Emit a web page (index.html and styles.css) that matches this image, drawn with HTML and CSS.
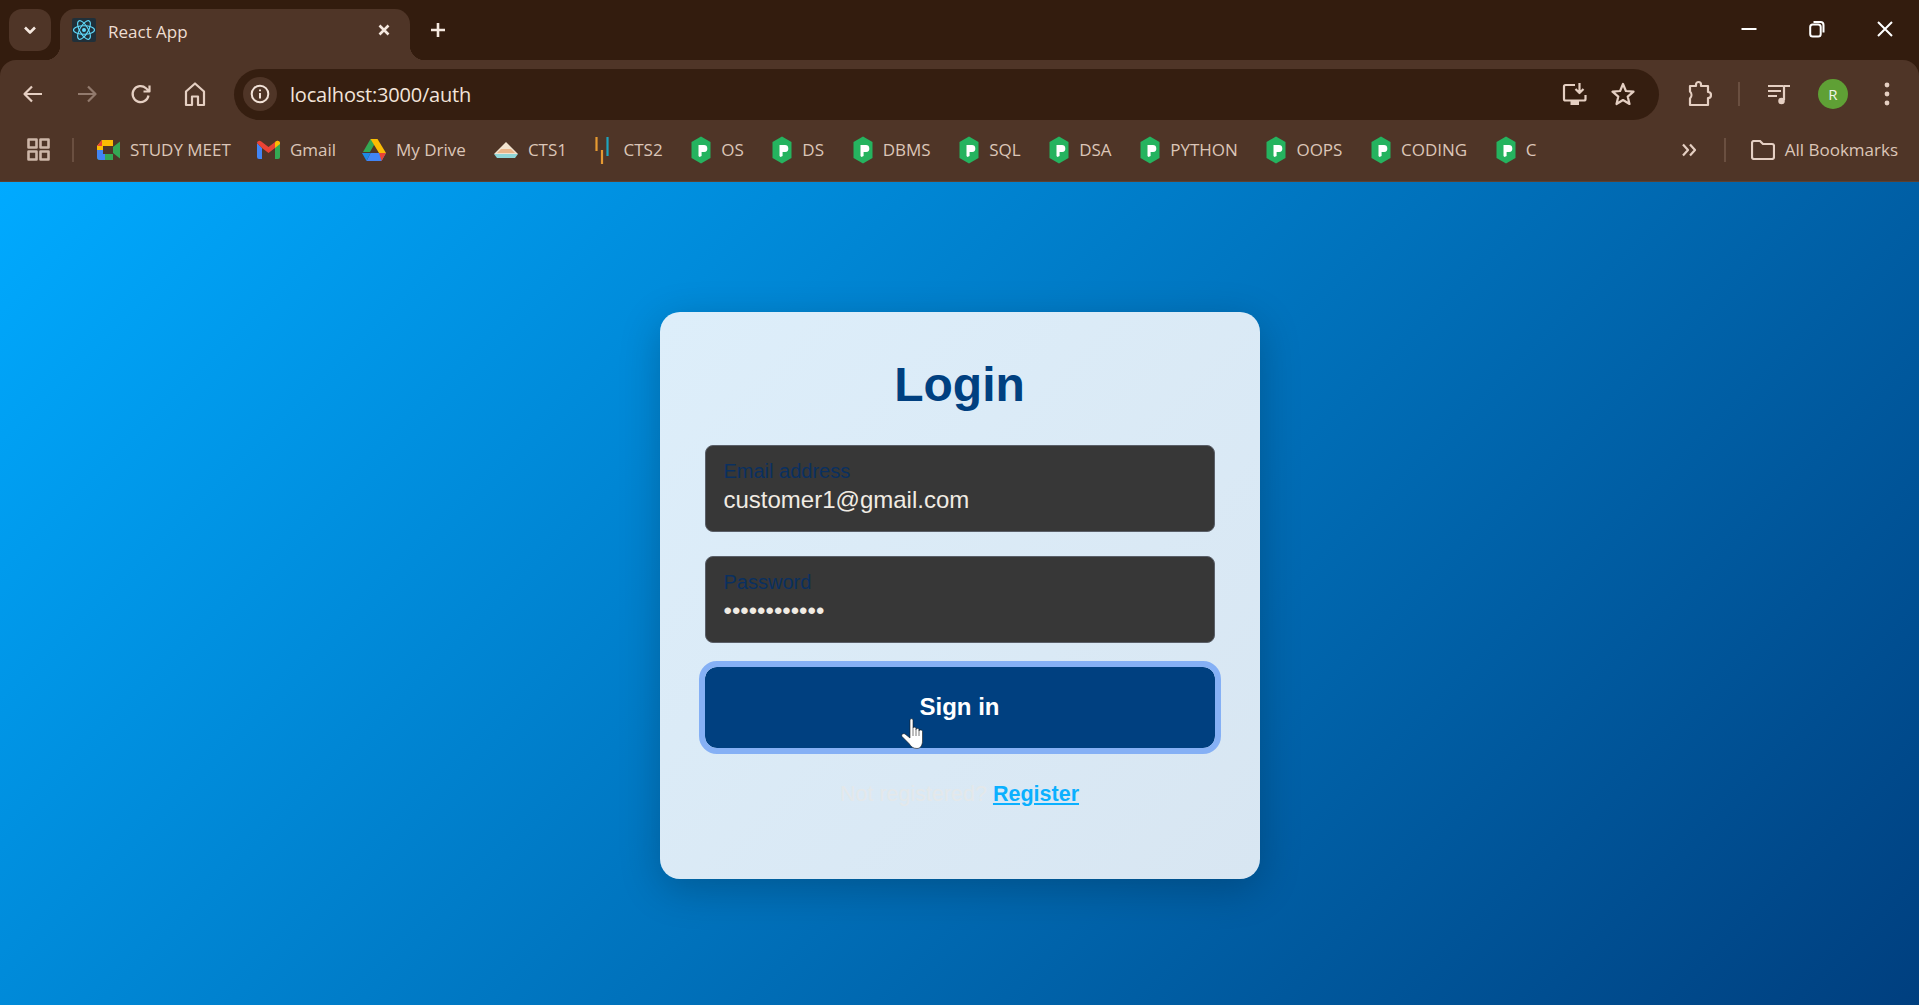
FILE: index.html
```html
<!DOCTYPE html>
<html lang="en">
<head>
<meta charset="utf-8">
<title>React App</title>
<link rel="stylesheet" href="styles.css">
</head>
<body>
<svg class="sprite" aria-hidden="true">
  <symbol id="hex" viewBox="0 0 20 28">
    <path d="M10 0.5 19.5 6V22L10 27.5 0.5 22V6Z" fill="#25b35f"/>
    <path d="M7.500 9h5a3.500 3.500 0 0 1 .6 7H10.600V20L8.500 21 7.500 20Z" fill="#fff"/>
  </symbol>
</svg>
<div class="browser">
  <header class="tabstrip">
    <button class="tabsearch"><svg width="14" height="14" viewBox="0 0 14 14"><path d="M2 4.5 7 9.5 12 4.5" class="ic-w"/></svg></button>
    <div class="tab">
      <svg class="favicon" width="24" height="24" viewBox="0 0 24 24">
        <rect width="24" height="24" rx="2" fill="#20303a"/>
        <g fill="none" stroke="#61dafb" stroke-width="1.1">
          <ellipse cx="12" cy="12" rx="10.5" ry="4.2"/>
          <ellipse cx="12" cy="12" rx="10.5" ry="4.2" transform="rotate(60 12 12)"/>
          <ellipse cx="12" cy="12" rx="10.5" ry="4.2" transform="rotate(120 12 12)"/>
        </g>
        <circle cx="12" cy="12" r="2" fill="#61dafb"/>
      </svg>
      <span class="tab-title">React App</span>
      <svg class="tab-close" width="14" height="14" viewBox="0 0 14 14"><path d="M2.5 2.5 11.5 11.5M11.5 2.5 2.5 11.5" class="ic-w"/></svg>
    </div>
    <button class="newtab"><svg width="18" height="18" viewBox="0 0 18 18"><path d="M9 2V16M2 9H16" class="ic-w"/></svg></button>
    <div class="winctl">
      <button class="wbtn"><svg width="16" height="16" viewBox="0 0 16 16"><path d="M0.5 8H15.5" class="ic-win"/></svg></button>
      <button class="wbtn"><svg width="16" height="18" viewBox="0 0 16 18"><rect x="1.2" y="4.5" width="10.5" height="12" rx="2.5" class="ic-win"/><path d="M4.5 2H11.5A3 3 0 0 1 14.5 5V12.5" class="ic-win"/></svg></button>
      <button class="wbtn"><svg width="18" height="18" viewBox="0 0 18 18"><path d="M2 2 16 16M16 2 2 16" class="ic-win"/></svg></button>
    </div>
  </header>

  <nav class="toolbar">
    <button class="cell"><svg width="24" height="24" viewBox="0 0 24 24"><path d="M21 12H4M11 4.5 3.5 12 11 19.500" class="ic"/></svg></button>
    <button class="cell dim"><svg width="24" height="24" viewBox="0 0 24 24"><path d="M3 12H20M13 4.500 20.500 12 13 19.500" class="ic"/></svg></button>
    <button class="cell"><svg width="24" height="24" viewBox="0 0 24 24"><path d="M19.500 13.500A8 8 0 1 1 17 6.200L20 9M20.500 3.500V9.500H14.500" class="ic"/></svg></button>
    <button class="cell"><svg width="24" height="26" viewBox="0 0 24 26"><path d="M3 24V10.500L12 2.500 21 10.500V24H15V15.500H9V24Z" class="ic"/></svg></button>
    <div class="omnibox">
      <span class="info"><svg width="20" height="20" viewBox="0 0 20 20"><circle cx="10" cy="10" r="8.300" class="ic-t"/><path d="M10 9V14.500M10 5.500V7.200" class="ic-t"/></svg></span>
      <span class="url">localhost:3000/auth</span>
      <div class="omni-actions">
        <button class="cell-s"><svg width="26" height="26" viewBox="0 0 26 26"><path d="M13 4H3.500A1.500 1.500 0 0 0 2 5.500V18A1.500 1.500 0 0 0 3.500 19.500H22A1.500 1.500 0 0 0 23.500 18V14M17.500 2V11.500M13.500 8 17.500 12 21.500 8" class="ic"/><path d="M8.500 20H17V24H8.500Z" fill="#e5cfc2"/></svg></button>
        <button class="cell-s"><svg width="24" height="24" viewBox="0 0 24 24"><path d="M12 2 14.900 9 22.500 9.600 16.700 14.600 18.500 22 12 18 5.500 22 7.300 14.600 1.500 9.600 9.100 9Z" class="ic"/></svg></button>
      </div>
    </div>
    <div class="tool-right">
      <button class="cell-s"><svg width="26" height="28" viewBox="0 0 26 28"><path d="M4 6H10V4.500A2.500 2.500 0 0 1 15 4.500V6H22V12A3 3 0 0 1 22 18V25H4V18.500A5 5 0 0 0 4 11.500Z" class="ic"/></svg></button>
      <span class="vsep"></span>
      <button class="cell-s"><svg width="26" height="24" viewBox="0 0 26 24"><path d="M2 4H17M2 9H15M2 14H11M18 18V4H24" class="ic"/><circle cx="15.500" cy="19" r="3.300" fill="#e5cfc2"/></svg></button>
      <span class="avatar-cell"><span class="avatar">R</span></span>
      <button class="cell-s"><svg width="6" height="26" viewBox="0 0 6 26"><circle cx="3" cy="4" r="2.400" fill="#e5cfc2"/><circle cx="3" cy="13" r="2.400" fill="#e5cfc2"/><circle cx="3" cy="22" r="2.400" fill="#e5cfc2"/></svg></button>
    </div>
  </nav>

  <nav class="bookmarks">
    <svg class="apps" width="23" height="23" viewBox="0 0 23 23"><rect x="1.500" y="1.500" width="8" height="8" class="ic-g"/><rect x="13.500" y="1.500" width="8" height="8" class="ic-g"/><rect x="1.500" y="13.500" width="8" height="8" class="ic-g"/><rect x="13.500" y="13.500" width="8" height="8" class="ic-g"/></svg>
    <span class="vsep sep-apps"></span>
    <ul class="bm-list">
      <li class="bm"><svg width="23" height="20" viewBox="0 0 23 20"><path d="M5 0H16V6H6V14H16V20H3A3 3 0 0 1 0 17V6Z" fill="#34a853"/><path d="M5 0H16V6H6V10H0V6Z" fill="#fbbc04"/><path d="M0 10H6V14H8V20H3A3 3 0 0 1 0 17Z" fill="#4285f4"/><path d="M0 6 5 0V6Z" fill="#ea4335"/><path d="M16 7 23 1.500V18.500L16 13Z" fill="#34a853"/></svg>STUDY MEET</li>
      <li class="bm"><svg width="23" height="20" viewBox="0 0 23 20"><path d="M0 3V17A2 2 0 0 0 2 19H5V8Z" fill="#4285f4"/><path d="M23 3V17A2 2 0 0 1 21 19H18V8Z" fill="#34a853"/><path d="M0 3C0 1 2.500 0 4 1.200L11.500 7 19 1.200C20.500 0 23 1 23 3L18 8 11.500 13 5 8Z" fill="#ea4335"/><path d="M18 8V2.500L19 1.200C20.500 0 23 1 23 3V4Z" fill="#fbbc04"/></svg>Gmail</li>
      <li class="bm"><svg width="24" height="22" viewBox="0 0 24 22"><path d="M8.500 0H15.500L8 13H1Z" fill="#34a853"/><path d="M8.500 0H15.500L24 14H17Z" fill="#fbbc04"/><path d="M4.500 22H19.500L24 14H8.500Z" fill="#4285f4"/><path d="M17 14H24L19.500 22Z" fill="#ea4335"/><path d="M8.500 14 0 14 4.500 22Z" fill="#1e88e5"/><path d="M12 7 16 14H8Z" fill="#4f3527"/></svg>My Drive</li>
      <li class="bm bm-cts1"><svg width="24" height="18" viewBox="0 0 24 18"><path d="M12 1 24 13H0Z" fill="#f2e3cf"/><path d="M7 8H17L21 12H3Z" fill="#e9b58a"/><path d="M0 13H24L21 17H3Z" fill="#8fd6d8"/></svg>CTS1</li>
      <li class="bm bm-cts2"><svg width="14" height="28" viewBox="0 0 14 28"><path d="M1.500 1V15" stroke="#e69a32" stroke-width="2.200"/><path d="M7 14V28" stroke="#e69a32" stroke-width="2.200"/><path d="M12.500 1V20" stroke="#1ea4c0" stroke-width="2.200"/></svg>CTS2</li>
      <li class="bm bm-hex"><svg class="hex" viewBox="0 0 20 28"><use href="#hex"/></svg>OS</li>
      <li class="bm bm-hex"><svg class="hex" viewBox="0 0 20 28"><use href="#hex"/></svg>DS</li>
      <li class="bm bm-hex"><svg class="hex" viewBox="0 0 20 28"><use href="#hex"/></svg>DBMS</li>
      <li class="bm bm-hex"><svg class="hex" viewBox="0 0 20 28"><use href="#hex"/></svg>SQL</li>
      <li class="bm bm-hex"><svg class="hex" viewBox="0 0 20 28"><use href="#hex"/></svg>DSA</li>
      <li class="bm bm-hex"><svg class="hex" viewBox="0 0 20 28"><use href="#hex"/></svg>PYTHON</li>
      <li class="bm bm-hex"><svg class="hex" viewBox="0 0 20 28"><use href="#hex"/></svg>OOPS</li>
      <li class="bm bm-hex"><svg class="hex" viewBox="0 0 20 28"><use href="#hex"/></svg>CODING</li>
      <li class="bm bm-hex"><svg class="hex" viewBox="0 0 20 28"><use href="#hex"/></svg>C</li>
    </ul>
    <div class="bm-right">
      <svg width="16" height="14" viewBox="0 0 16 14"><path d="M2 1.500 7 7 2 12.500M9 1.500 14 7 9 12.500" class="ic"/></svg>
      <span class="vsep sep-all"></span>
      <span class="bm"><svg width="24" height="20" viewBox="0 0 24 20"><path d="M1 3A2 2 0 0 1 3 1H9L12 4H21A2 2 0 0 1 23 6V17A2 2 0 0 1 21 19H3A2 2 0 0 1 1 17Z" class="ic"/></svg>All Bookmarks</span>
    </div>
  </nav>

  <main class="page">
    <section class="card">
      <h1 class="title">Login</h1>
      <div class="field">
        <span class="field-label">Email address</span>
        <span class="field-value">customer1@gmail.com</span>
      </div>
      <div class="field">
        <span class="field-label">Password</span>
        <span class="field-value">••••••••••••</span>
      </div>
      <div class="submit">
        <button class="signin">Sign in</button>
        <svg class="cursor" width="24" height="31" viewBox="0 0 24 31"><path d="M9 2C9 .3 12 .3 12 2V10C12 8.800 15 8.800 15 10.500V11.500C15 10 18 10 18 11.800V13C18 11.500 21.500 11.500 21.500 13.500V23C21.500 27 19.500 30.500 16 30.500C12 30.500 10 28.500 8 25.500L1 18.500C0 16.500 2 15 4 16L9 20Z" fill="#fff" stroke="#1a1a1a" stroke-width=".6"/><path d="M12 10V18M15 11V18M18 12.500V18" stroke="#555" stroke-width=".8" fill="none"/></svg>
      </div>
      <p class="switch"><span class="switch-q">Not registered?</span> <a class="switch-link" href="#">Register</a></p>
    </section>
  </main>
</div>
</body>
</html>
```

FILE: styles.css
```css
* { box-sizing: border-box; }
html, body { margin: 0; height: 100%; overflow: hidden; }
body { font-family: "Open Sans", "Noto Sans", sans-serif; background: #331c0e; }
button { background: none; border: 0; padding: 0; margin: 0; color: inherit; font: inherit; display: flex; align-items: center; justify-content: center; }
.sprite { display: none; }
.browser { height: 100%; display: flex; flex-direction: column; }

.ic, .ic-w, .ic-win, .ic-t, .ic-g { fill: none; stroke-linejoin: round; }
.ic { stroke: #e5cfc2; stroke-width: 2.2; }
.ic-w { stroke: #f5e8df; stroke-width: 2.6; }
.ic-win { stroke: #fff; stroke-width: 2; }
.ic-t { stroke: #f2e2d8; stroke-width: 2; }
.ic-g { stroke: #cdb6a8; stroke-width: 2.6; }

.tabstrip { height: 60px; flex: none; display: flex; align-items: flex-start; background: #331c0e; }
.tabsearch { width: 42px; height: 42px; margin: 9px 0 0 9px; border-radius: 13px; background: #4f3527; }
.tab { position: relative; width: 350px; height: 51px; margin: 9px 0 0 9px; padding: 9px 16px 0 12px; display: flex; align-items: flex-start; background: #4f3527; border-radius: 15px 15px 0 0; }
.tab::before, .tab::after { content: ""; position: absolute; bottom: 0; width: 15px; height: 15px; }
.tab::before { left: -15px; background: radial-gradient(circle at 0 0, transparent 15px, #4f3527 15.5px); }
.tab::after { right: -15px; background: radial-gradient(circle at 100% 0, transparent 15px, #4f3527 15.5px); }
.favicon { flex: none; }
.tab-title { margin-left: 12px; font-size: 17px; line-height: 28px; color: #eeddd2; }
.tab-close { margin: 5px 3px 0 auto; }
.newtab { width: 36px; height: 36px; margin: 12px 0 0 10px; }
.winctl { margin-left: auto; display: flex; }
.wbtn { width: 68px; height: 58px; }

.toolbar { height: 68px; flex: none; display: flex; align-items: center; background: #4f3527; padding-left: 6px; border-radius: 16px 16px 0 0; position: relative; }
.cell { width: 54px; height: 48px; flex: none; }
.dim { opacity: .45; }
.omnibox { flex: 1; height: 51px; margin: 0 0 0 12px; padding-left: 9px; display: flex; align-items: center; background: #351e10; border-radius: 26px; }
.info { width: 34px; height: 34px; border-radius: 50%; background: #4f3527; display: flex; align-items: center; justify-content: center; flex: none; }
.url { margin-left: 13px; font-size: 20px; color: #f2e4da; letter-spacing: -.2px; }
.omni-actions { margin-left: auto; padding-right: 12px; display: flex; }
.cell-s { width: 48px; height: 48px; flex: none; }
.tool-right { width: 260px; flex: none; display: flex; align-items: center; padding-left: 16px; }
.vsep { width: 2px; height: 24px; background: #6a4f40; flex: none; margin: 0 15px; }
.avatar-cell { width: 60px; display: flex; justify-content: center; flex: none; }
.avatar { width: 30px; height: 30px; border-radius: 50%; background: #5fa035; color: #f0f5e8; font-size: 15px; display: flex; align-items: center; justify-content: center; }

.bookmarks { height: 54px; flex: none; display: flex; align-items: flex-start; background: #4f3527; border-bottom: 1px solid #5c4030; padding: 0 0 0 27px; color: #dcc6b8; font-size: 17px; line-height: 44px; }
.apps { margin-top: 10px; flex: none; }
.sep-apps { margin: 10px 23px 0 22px; width: 2px; }
.bm-list { list-style: none; display: flex; gap: 26px; margin: 0; padding: 0; }
.bm { display: flex; align-items: center; gap: 10px; height: 44px; white-space: nowrap; }
.hex { width: 20px; height: 28px; }
.bm-hex { margin-left: 2.6px; }
.bm-cts1 { margin-left: 2px; }
.bm-cts2 { margin-left: 1.5px; gap: 15px; }
.bm-right { margin-left: auto; padding-right: 21px; display: flex; align-items: center; height: 44px; }
.sep-all { margin: 0 25px 0 27px; }

.page { flex: 1; display: flex; align-items: center; justify-content: center; padding-top: 4px; background: linear-gradient(135deg, #00aaff 0%, #003f7f 100%); }
.card { width: 600px; height: 567px; padding: 45px 45px 0; border-radius: 20px; background: linear-gradient(135deg, #ddeefa, #d8e6f2); box-shadow: 0 10px 40px rgba(0, 0, 0, .22); font-family: "Liberation Sans", Arial, sans-serif; }
.title { margin: 0 0 32px; height: 56px; font-size: 48px; line-height: 56px; font-weight: 700; text-align: center; color: #004080; }
.field { height: 87px; margin-bottom: 24px; padding: 13px 18px 0; display: flex; flex-direction: column; background: #373737; border: 1px solid #5a5f68; border-radius: 8px; }
.field-label { font-size: 20px; line-height: 24px; color: #0a3060; }
.field-value { font-size: 24px; line-height: 34px; color: #f0ebe3; }
.submit { position: relative; }
.signin { width: 100%; height: 81px; padding-bottom: 2px; background: #004080; color: #fff; font-size: 24px; font-weight: 700; border-radius: 12px; outline: 6px solid #85b0f5; }
.cursor { position: absolute; left: 196px; top: 51px; }
.switch { margin: 32px 0 0; font-size: 21.5px; line-height: 28px; text-align: center; }
.switch-q { color: #e4e8ea; }
.switch-link { color: #0ab0ff; font-weight: 700; text-decoration: underline; }
```
